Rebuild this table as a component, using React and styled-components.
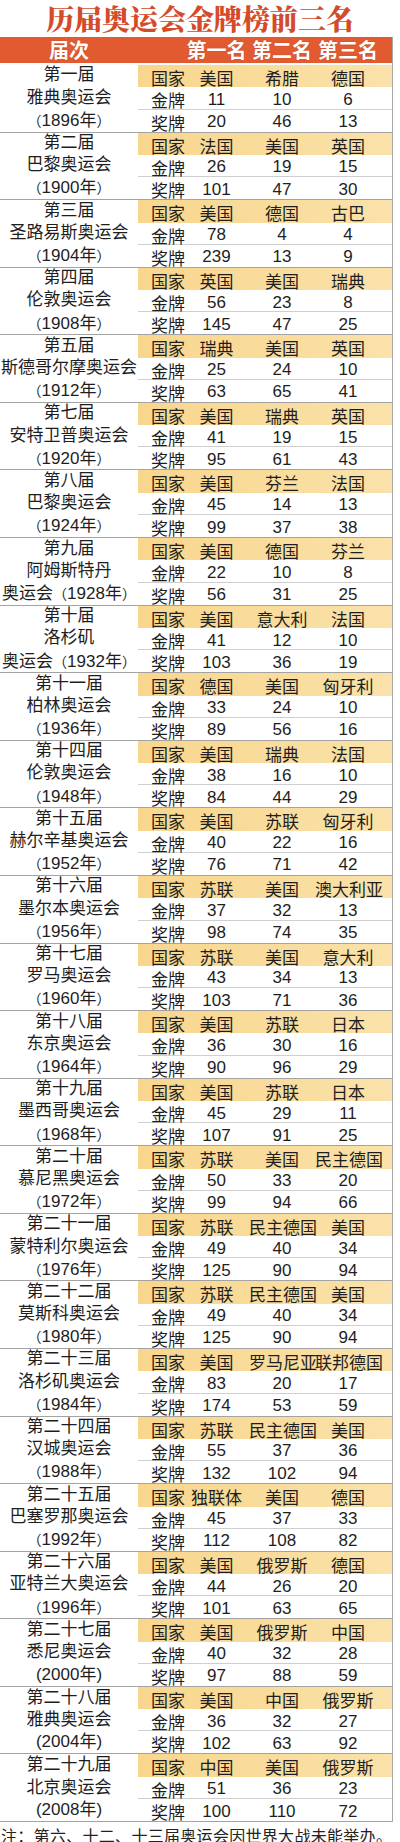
import React from "react";
import styled, { createGlobalStyle } from "styled-components";

const GlobalStyle = createGlobalStyle`
  body {
    margin: 0;
    background: #fff;
    font-family: "Liberation Sans", "Noto Sans CJK SC", sans-serif;
    color: #1e1e1e;
  }
`;

// [届次, 城市, 年份, 国家, 金牌, 奖牌]
const games = [
  ["第一届", "雅典奥运会", "（1896年）", ["美国", "希腊", "德国"], [11, 10, 6], [20, 46, 13]],
  ["第二届", "巴黎奥运会", "（1900年）", ["法国", "美国", "英国"], [26, 19, 15], [101, 47, 30]],
  ["第三届", "圣路易斯奥运会", "（1904年）", ["美国", "德国", "古巴"], [78, 4, 4], [239, 13, 9]],
  ["第四届", "伦敦奥运会", "（1908年）", ["英国", "美国", "瑞典"], [56, 23, 8], [145, 47, 25]],
  ["第五届", "斯德哥尔摩奥运会", "（1912年）", ["瑞典", "美国", "英国"], [25, 24, 10], [63, 65, 41]],
  ["第七届", "安特卫普奥运会", "（1920年）", ["美国", "瑞典", "英国"], [41, 19, 15], [95, 61, 43]],
  ["第八届", "巴黎奥运会", "（1924年）", ["美国", "芬兰", "法国"], [45, 14, 13], [99, 37, 38]],
  ["第九届", "阿姆斯特丹", "奥运会（1928年）", ["美国", "德国", "芬兰"], [22, 10, 8], [56, 31, 25]],
  ["第十届", "洛杉矶", "奥运会（1932年）", ["美国", "意大利", "法国"], [41, 12, 10], [103, 36, 19]],
  ["第十一届", "柏林奥运会", "（1936年）", ["德国", "美国", "匈牙利"], [33, 24, 10], [89, 56, 16]],
  ["第十四届", "伦敦奥运会", "（1948年）", ["美国", "瑞典", "法国"], [38, 16, 10], [84, 44, 29]],
  ["第十五届", "赫尔辛基奥运会", "（1952年）", ["美国", "苏联", "匈牙利"], [40, 22, 16], [76, 71, 42]],
  ["第十六届", "墨尔本奥运会", "（1956年）", ["苏联", "美国", "澳大利亚"], [37, 32, 13], [98, 74, 35]],
  ["第十七届", "罗马奥运会", "（1960年）", ["苏联", "美国", "意大利"], [43, 34, 13], [103, 71, 36]],
  ["第十八届", "东京奥运会", "（1964年）", ["美国", "苏联", "日本"], [36, 30, 16], [90, 96, 29]],
  ["第十九届", "墨西哥奥运会", "（1968年）", ["美国", "苏联", "日本"], [45, 29, 11], [107, 91, 25]],
  ["第二十届", "慕尼黑奥运会", "（1972年）", ["苏联", "美国", "民主德国"], [50, 33, 20], [99, 94, 66]],
  ["第二十一届", "蒙特利尔奥运会", "（1976年）", ["苏联", "民主德国", "美国"], [49, 40, 34], [125, 90, 94]],
  ["第二十二届", "莫斯科奥运会", "（1980年）", ["苏联", "民主德国", "美国"], [49, 40, 34], [125, 90, 94]],
  ["第二十三届", "洛杉矶奥运会", "（1984年）", ["美国", "罗马尼亚", "联邦德国"], [83, 20, 17], [174, 53, 59]],
  ["第二十四届", "汉城奥运会", "（1988年）", ["苏联", "民主德国", "美国"], [55, 37, 36], [132, 102, 94]],
  ["第二十五届", "巴塞罗那奥运会", "（1992年）", ["独联体", "美国", "德国"], [45, 37, 33], [112, 108, 82]],
  ["第二十六届", "亚特兰大奥运会", "（1996年）", ["美国", "俄罗斯", "德国"], [44, 26, 20], [101, 63, 65]],
  ["第二十七届", "悉尼奥运会", "(2000年)", ["美国", "俄罗斯", "中国"], [40, 32, 28], [97, 88, 59]],
  ["第二十八届", "雅典奥运会", "(2004年)", ["美国", "中国", "俄罗斯"], [36, 32, 27], [102, 63, 92]],
  ["第二十九届", "北京奥运会", "(2008年)", ["中国", "美国", "俄罗斯"], [51, 36, 23], [100, 110, 72]],
];

const Page = styled.div`
  width: 400px;
  height: 1842px;
  overflow: hidden;
`;

const Title = styled.h1`
  margin: 0;
  height: 37px;
  text-align: center;
  font-family: "Noto Serif CJK SC", "Noto Sans CJK SC", serif;
  font-weight: 900;
  font-size: 28px;
  line-height: 36px;
  color: #d34b2b;
`;

const Table = styled.div`
  width: 392px;
  border-right: 1px solid #a8a8a8;
`;

const cols = "138px 46px 65px 66px 66px 1fr";

const HeadRow = styled.div`
  display: grid;
  grid-template-columns: ${cols};
  height: 26px;
  background: #e15a30;
  border-bottom: 2px solid #fff;
  color: #fff;
  font-family: "Noto Sans CJK SC", sans-serif;
  font-weight: 700;
  font-size: 20px;
  line-height: 26px;
  text-shadow: 0 0 1px rgba(120, 30, 0, 0.4);
`;

const HeadCell = styled.div`
  text-align: center;
  white-space: nowrap;
  grid-column: ${(p) => p.$col};
`;

const Block = styled.div`
  display: grid;
  grid-template-columns: ${cols};
  grid-template-rows: 22.4px 22.2px 22px;
  border-bottom: 1px solid #a3a3a3;
`;

const Edition = styled.div`
  grid-column: 1;
  grid-row: 1 / 4;
  display: flex;
  flex-direction: column;
  align-items: center;
  justify-content: center;
  font-size: 17px;
  line-height: 22.2px;
  white-space: nowrap;
  background: #fff;
`;

// full-width bracket from the CJK font, a bit smaller so long year lines fit
const Bracket = styled.span`
  font-family: "Noto Sans CJK SC", sans-serif;
  font-size: 14px;
`;

const Row = styled.div`
  grid-column: 2 / 7;
  display: grid;
  grid-template-columns: 46px 65px 66px 66px 1fr;
  align-items: center;
  font-size: 17px;
  background: ${(p) => (p.$head ? "linear-gradient(90deg, #f8d68d, #fae2aa)" : "#fff")};
  border-bottom: ${(p) => (p.$line ? "1px solid #cfcfcf" : "none")};
`;

const Label = styled.span`
  padding-left: 13px;
  white-space: nowrap;
`;

const Cell = styled.span`
  text-align: center;
  white-space: nowrap;
`;

const Note = styled.p`
  margin: 0;
  padding: 3px 0 0 1px;
  font-size: 16px;
  letter-spacing: 0.3px;
  line-height: 20px;
  white-space: nowrap;
  font-family: "Noto Sans CJK SC", sans-serif;
  color: #222;
`;

const YearLine = ({ text }) => (
  <span>
    {text.split(/([（）])/).map((part, i) =>
      part === "（" || part === "）" ? <Bracket key={i}>{part}</Bracket> : part
    )}
  </span>
);

const GameBlock = ({ g }) => (
  <Block>
    <Edition>
      <span>{g[0]}</span>
      <span>{g[1]}</span>
      <YearLine text={g[2]} />
    </Edition>
    <Row $head>
      <Label>国家</Label>
      {g[3].map((c, i) => (
        <Cell key={i}>{c}</Cell>
      ))}
    </Row>
    <Row $line>
      <Label>金牌</Label>
      {g[4].map((c, i) => (
        <Cell key={i}>{c}</Cell>
      ))}
    </Row>
    <Row>
      <Label>奖牌</Label>
      {g[5].map((c, i) => (
        <Cell key={i}>{c}</Cell>
      ))}
    </Row>
  </Block>
);

export default function App() {
  return (
    <Page>
      <GlobalStyle />
      <Title>历届奥运会金牌榜前三名</Title>
      <Table>
        <HeadRow>
          <HeadCell $col={1}>届次</HeadCell>
          <HeadCell $col={3}>第一名</HeadCell>
          <HeadCell $col={4}>第二名</HeadCell>
          <HeadCell $col={5}>第三名</HeadCell>
        </HeadRow>
        {games.map((g) => (
          <GameBlock key={g[0]} g={g} />
        ))}
      </Table>
      <Note>注：第六、十二、十三届奥运会因世界大战未能举办。</Note>
    </Page>
  );
}
